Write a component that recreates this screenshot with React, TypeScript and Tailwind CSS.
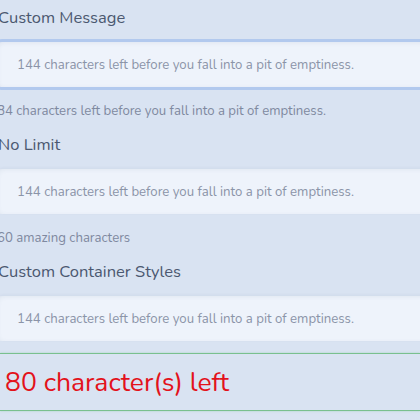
import React from "react";

const font = { fontFamily: '"Nunito", "Open Sans", "Noto Sans", sans-serif' };

function Field({ label, helper, focused }: { label: string; helper?: string; focused?: boolean }) {
  return (
    <div className="flex flex-col">
      <div className="h-[24px] leading-[24px] text-[16.5px] text-[#4b5870] ml-[-2px] whitespace-nowrap">{label}</div>
      <input
        readOnly
        placeholder="144 characters left before you fall into a pit of emptiness."
        className={
          "mt-[12px] ml-[-4px] h-[45px] w-[440px] rounded-[6px] bg-[#eef3fb] px-[21px] text-[13.2px] text-[#4b5870] placeholder:text-[#8b94a8] outline-none " +
          (focused
            ? "shadow-[0_0_0_3px_#b2c9ee,inset_2px_1px_4px_rgba(60,80,120,0.08)]"
            : "shadow-[0_-1px_3px_rgba(60,80,120,0.06),inset_2px_1px_4px_rgba(60,80,120,0.07)]")
        }
        style={font}
      />
      {helper && (
        <div className="mt-[14px] h-[20px] leading-[20px] text-[13.2px] text-[#7f89a0] ml-[-3px] whitespace-nowrap">{helper}</div>
      )}
    </div>
  );
}

export default function App() {
  return (
    <div className="w-[420px] h-[420px] overflow-hidden bg-[#d9e3f2]" style={font}>
      <div className="flex flex-col pt-[6px]">
        <Field label="Custom Message" helper="84 characters left before you fall into a pit of emptiness." focused />
        <div className="mt-[12px]">
          <Field label="No Limit" helper="60 amazing characters" />
        </div>
        <div className="mt-[12px]">
          <Field label="Custom Container Styles" />
        </div>
        <div className="mt-[12px] h-[58px] border-y border-[#79c08e] shadow-[0_0_2px_rgba(120,200,150,0.5)] flex items-center pl-[5px]">
          <span className="text-[26.5px] leading-none text-[#e3121b] whitespace-nowrap">80 character(s) left</span>
        </div>
      </div>
    </div>
  );
}
